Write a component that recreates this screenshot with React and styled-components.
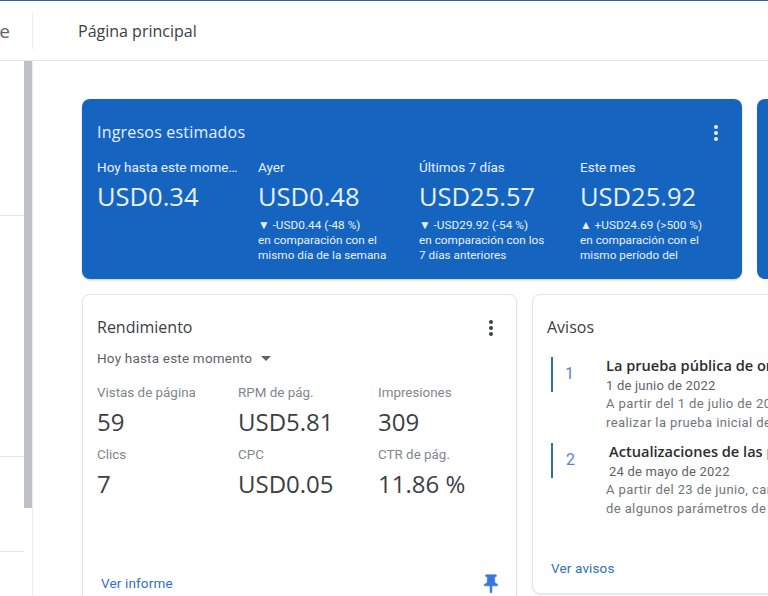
import React from 'react';
import styled, { createGlobalStyle } from 'styled-components';

const GlobalStyle = createGlobalStyle`
  html, body {
    margin: 0;
    padding: 0;
    height: 100%;
    overflow: hidden;
    background: #fff;
  }
  * { box-sizing: border-box; }
`;

const Page = styled.div`
  width: 768px;
  height: 596px;
  overflow: hidden;
  border-top: 1px solid #2f6690;
  font-family: Roboto, "Liberation Sans", sans-serif;
  color: #3c4043;
`;

const Header = styled.header`
  height: 60px;
  padding-top: 1px;
  display: flex;
  align-items: center;
  border-bottom: 1px solid #e3e5e8;
`;

const Brand = styled.div`
  width: 33px;
  height: 36px;
  flex: none;
  display: flex;
  align-items: center;
  justify-content: flex-end;
  overflow: hidden;
  padding-right: 22px;
  border-right: 1px solid #e8eaed;
  font-family: "Open Sans", sans-serif;
  font-size: 19px;
  color: #5f6368;
`;

const PageTitle = styled.h1`
  margin: 0 0 0 45px;
  font-family: "Open Sans", sans-serif;
  font-size: 16px;
  font-weight: 400;
  color: #3c4043;
`;

const Body = styled.div`
  display: flex;
  height: 535px;
`;

const Sidebar = styled.aside`
  width: 33px;
  flex: none;
  display: flex;
  border-right: 1px solid #e8eaed;
`;

const NavList = styled.div`
  width: 24px;
  display: flex;
  flex-direction: column;
`;

const NavSection = styled.div`
  height: ${p => p.$height}px;
  flex: none;
  border-bottom: 1px solid #e3e5e8;
`;

const Scrollbar = styled.div`
  width: 8px;
  height: 447px;
  background: #bdc1c6;
`;

const Main = styled.main`
  flex: 1;
  min-width: 0;
  overflow: hidden;
  padding: 38px 0 0 49px;
  display: flex;
  flex-direction: column;
  gap: 15px;
`;

const Row = styled.div`
  display: flex;
  gap: 15px;
`;

const BlueCard = styled.section`
  width: 660px;
  height: 180px;
  flex: none;
  position: relative;
  padding: 23px 15px 0;
  background: #1565c0;
  border-radius: 8px;
  box-shadow: 0 1px 2px rgba(60, 64, 67, 0.3);
  color: #fff;
`;

const BlueStub = styled.div`
  width: 60px;
  height: 180px;
  flex: none;
  background: #1565c0;
  border-radius: 8px;
`;

const CardTitle = styled.h2`
  margin: 0;
  font-family: "Open Sans", sans-serif;
  font-size: 16px;
  line-height: 20px;
  font-weight: 400;
  letter-spacing: ${p => p.$light ? '0.2px' : '0'};
  color: ${p => p.$light ? '#e8f0fe' : '#3c4043'};
`;

const MoreButton = styled.button`
  position: absolute;
  top: ${p => p.$top}px;
  right: ${p => p.$right}px;
  padding: 0;
  border: 0;
  background: none;
  display: flex;
  color: ${p => p.$color};
`;

const EarningsGrid = styled.div`
  display: grid;
  grid-template-columns: 161px repeat(3, 161px);
  margin-top: 16px;
`;

const Earning = styled.div`
  min-width: 0;
  padding-right: 16px;
`;

const EarningLabel = styled.div`
  font-size: 13.5px;
  line-height: 18px;
  white-space: nowrap;
  overflow: hidden;
  text-overflow: ellipsis;
  color: #e8f0fe;
`;

const EarningValue = styled.div`
  margin-top: 3px;
  font-family: "Open Sans", sans-serif;
  font-size: 25.5px;
  line-height: 34px;
  color: #e8f0fe;
`;

const EarningNote = styled.div`
  margin-top: 5px;
  font-size: 11.8px;
  line-height: 15px;
  white-space: nowrap;
  color: #e8f0fe;
`;

const WhiteCard = styled.section`
  width: ${p => p.$width}px;
  height: ${p => p.$height}px;
  flex: none;
  position: relative;
  padding: 22px 14px 0;
  background: #fff;
  border: 1px solid #e3e5e8;
  border-radius: 8px;
  box-shadow: 0 1px 2px rgba(60, 64, 67, 0.12);
`;

const Range = styled.div`
  margin-top: 12px;
  display: flex;
  align-items: center;
  gap: 9px;
  font-size: 13.5px;
  line-height: 18px;
  letter-spacing: 0.2px;
  color: #5f6368;
`;

const Caret = styled.span`
  width: 0;
  height: 0;
  border-left: 5px solid transparent;
  border-right: 5px solid transparent;
  border-top: 5px solid #5f6368;
`;

const MetricGrid = styled.div`
  display: grid;
  grid-template-columns: 141px 140px 120px;
  margin-top: 17px;
  row-gap: 7px;
`;

const MetricLabel = styled.div`
  font-size: 13.4px;
  line-height: 18px;
  color: #80868b;
`;

const MetricValue = styled.div`
  margin-top: 3px;
  font-family: "Open Sans", sans-serif;
  font-size: 24px;
  line-height: 34px;
  color: #3c4043;
`;

const LinkText = styled.a`
  position: absolute;
  left: ${p => p.$left}px;
  bottom: ${p => p.$bottom}px;
  font-size: 13.5px;
  line-height: 18px;
  letter-spacing: 0.15px;
  color: #2f6fc4;
`;

const PinIcon = styled.svg`
  position: absolute;
  right: 14px;
  bottom: 18px;
  width: 22px;
  height: 22px;
  fill: #3478e0;
  stroke: #3478e0;
  stroke-width: 0.7;
`;

const NoticeList = styled.div`
  margin-top: 18px;
  display: flex;
  flex-direction: column;
  gap: 9px;
`;

const Notice = styled.article`
  display: flex;
  align-items: flex-start;
`;

const NoticeBadge = styled.div`
  width: 2px;
  height: 35px;
  flex: none;
  margin: 2px 0 0 4px;
  background: #2f6fa8;
  position: relative;
`;

const NoticeNumber = styled.span`
  position: absolute;
  left: ${p => p.$left}px;
  top: 7px;
  font-size: 16px;
  line-height: 20px;
  color: #5b84c4;
`;

const NoticeBody = styled.div`
  margin-left: 53px;
  width: 300px;
  white-space: nowrap;
`;

const NoticeTitle = styled.h3`
  margin: 0;
  padding-left: ${p => p.$shift}px;
  font-family: "Open Sans", sans-serif;
  font-size: 14.6px;
  line-height: 20px;
  font-weight: 600;
  color: #2b2d30;
`;

const NoticeDate = styled.div`
  margin-top: 1px;
  padding-left: ${p => p.$shift}px;
  font-size: 13px;
  line-height: 19px;
  letter-spacing: 0.2px;
  color: #5f6368;
`;

const NoticeText = styled.div`
  font-size: 13px;
  line-height: 18.5px;
  letter-spacing: 0.4px;
  color: #70757a;
`;

const Dots = ({ color }) => (
  <svg width="4" height="16" viewBox="0 0 4 16" fill={color}>
    <circle cx="2" cy="2" r="2" />
    <circle cx="2" cy="8" r="2" />
    <circle cx="2" cy="14" r="2" />
  </svg>
);

const earnings = [
  { label: 'Hoy hasta este momento', value: 'USD0.34' },
  { label: 'Ayer', value: 'USD0.48', note: ['▼ -USD0.44 (-48 %)', 'en comparación con el', 'mismo día de la semana'] },
  { label: 'Últimos 7 días', value: 'USD25.57', note: ['▼ -USD29.92 (-54 %)', 'en comparación con los', '7 días anteriores'] },
  { label: 'Este mes', value: 'USD25.92', note: ['▲ +USD24.69 (>500 %)', 'en comparación con el', 'mismo período del'] },
];

const metrics = [
  { label: 'Vistas de página', value: '59' },
  { label: 'RPM de pág.', value: 'USD5.81' },
  { label: 'Impresiones', value: '309' },
  { label: 'Clics', value: '7' },
  { label: 'CPC', value: 'USD0.05' },
  { label: 'CTR de pág.', value: '11.86 %' },
];

const notices = [
  {
    number: 1,
    shift: 0,
    numberLeft: 14,
    title: 'La prueba pública de orígenes',
    date: '1 de junio de 2022',
    lines: ['A partir del 1 de julio de 2022, podrás', 'realizar la prueba inicial de la función'],
  },
  {
    number: 2,
    shift: 3,
    numberLeft: 15,
    title: 'Actualizaciones de las políticas',
    date: '24 de mayo de 2022',
    lines: ['A partir del 23 de junio, cambiaremos', 'de algunos parámetros de configuración'],
  },
];

export default function App() {
  return (
    <Page>
      <GlobalStyle />
      <Header>
        <Brand>AdSense</Brand>
        <PageTitle>Página principal</PageTitle>
      </Header>
      <Body>
        <Sidebar>
          <NavList>
            <NavSection $height={155} />
            <NavSection $height={241} />
            <NavSection $height={95} />
          </NavList>
          <Scrollbar />
        </Sidebar>
        <Main>
          <Row>
            <BlueCard>
              <CardTitle $light>Ingresos estimados</CardTitle>
              <MoreButton $top={26} $right={24} $color="#e8f0fe"><Dots color="currentColor" /></MoreButton>
              <EarningsGrid>
                {earnings.map(item => (
                  <Earning key={item.label}>
                    <EarningLabel>{item.label}</EarningLabel>
                    <EarningValue>{item.value}</EarningValue>
                    {item.note && (
                      <EarningNote>
                        {item.note.map(line => <div key={line}>{line}</div>)}
                      </EarningNote>
                    )}
                  </Earning>
                ))}
              </EarningsGrid>
            </BlueCard>
            <BlueStub />
          </Row>
          <Row>
            <WhiteCard $width={435} $height={320}>
              <CardTitle>Rendimiento</CardTitle>
              <MoreButton $top={25} $right={23} $color="#3c4043"><Dots color="currentColor" /></MoreButton>
              <Range>Hoy hasta este momento <Caret /></Range>
              <MetricGrid>
                {metrics.map(item => (
                  <div key={item.label}>
                    <MetricLabel>{item.label}</MetricLabel>
                    <MetricValue>{item.value}</MetricValue>
                  </div>
                ))}
              </MetricGrid>
              <LinkText $left={18} $bottom={21}>Ver informe</LinkText>
              <PinIcon viewBox="0 0 24 24">
                <path d="M16 9V4h1c.55 0 1-.45 1-1s-.45-1-1-1H7c-.55 0-1 .45-1 1s.45 1 1 1h1v5c0 1.66-1.34 3-3 3v2h5.97v7l1 1 1-1v-7H19v-2c-1.66 0-3-1.34-3-3z" />
              </PinIcon>
            </WhiteCard>
            <WhiteCard $width={300} $height={300}>
              <CardTitle>Avisos</CardTitle>
              <NoticeList>
                {notices.map(item => (
                  <Notice key={item.number}>
                    <NoticeBadge><NoticeNumber $left={item.numberLeft}>{item.number}</NoticeNumber></NoticeBadge>
                    <NoticeBody>
                      <NoticeTitle $shift={item.shift}>{item.title}</NoticeTitle>
                      <NoticeDate $shift={item.shift}>{item.date}</NoticeDate>
                      {item.lines.map(line => <NoticeText key={line}>{line}</NoticeText>)}
                    </NoticeBody>
                  </Notice>
                ))}
              </NoticeList>
              <LinkText $left={18} $bottom={16}>Ver avisos</LinkText>
            </WhiteCard>
          </Row>
        </Main>
      </Body>
    </Page>
  );
}
